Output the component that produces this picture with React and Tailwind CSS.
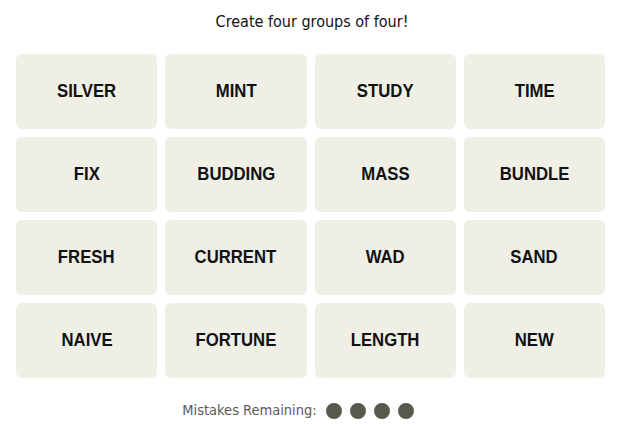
import React from "react";

const words = [
  "SILVER", "MINT", "STUDY", "TIME",
  "FIX", "BUDDING", "MASS", "BUNDLE",
  "FRESH", "CURRENT", "WAD", "SAND",
  "NAIVE", "FORTUNE", "LENGTH", "NEW",
];

export default function App() {
  return (
    <div className="w-[624px] h-[424px] bg-white flex flex-col items-center" style={{ fontFamily: '"DejaVu Sans Condensed", "Liberation Sans", sans-serif' }}>
      <p className="mt-[11px] h-[22px] leading-[22px] text-[16px] text-[#121212]">Create four groups of four!</p>
      <div className="mt-[21px] self-start ml-[16px] grid grid-cols-4 auto-rows-[75px] gap-x-[8px] gap-y-[8px] w-[589px]">
        {words.map((w) => (
          <div key={w} className="rounded-[6px] bg-[#efefe6] flex items-center justify-center pb-[2px] text-[#121212]">
            <span className="inline-block scale-x-[0.88] text-[19px] leading-[22px] font-bold" style={{ fontFamily: '"Liberation Sans", Arial, sans-serif' }}>{w}</span>
          </div>
        ))}
      </div>
      <div className="mt-[22px] mr-[28px] flex items-center gap-[9px]">
        <span className="text-[14.5px] text-[#5a5a5a]">Mistakes Remaining:</span>
        <div className="flex gap-[8px]">
          <span className="w-[16px] h-[16px] rounded-full bg-[#5a594e]" />
          <span className="w-[16px] h-[16px] rounded-full bg-[#5a594e]" />
          <span className="w-[16px] h-[16px] rounded-full bg-[#5a594e]" />
          <span className="w-[16px] h-[16px] rounded-full bg-[#5a594e]" />
        </div>
      </div>
    </div>
  );
}
